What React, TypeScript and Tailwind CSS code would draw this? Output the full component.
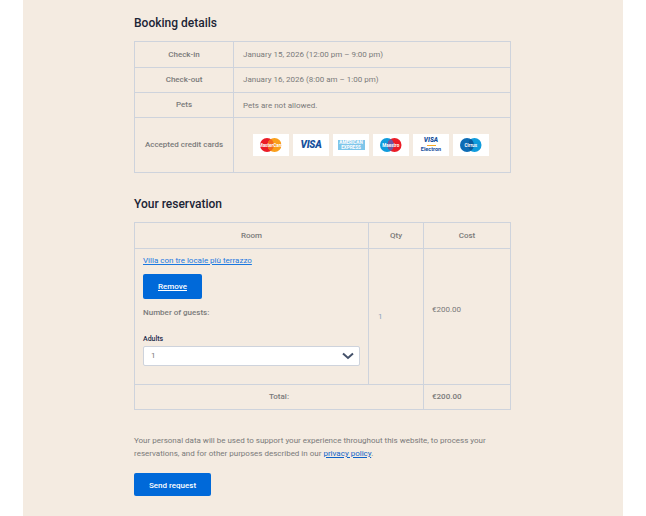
function CardBox({ children }: { children: React.ReactNode }) {
  return <div className="w-9 h-[22px] bg-white flex items-center justify-center">{children}</div>;
}

function TwoCircles({ left, right, label, overlap }: { left: string; right: string; label: string; overlap: string }) {
  return (
    <svg width="36" height="22" viewBox="0 0 36 22">
      <circle cx="14" cy="11" r="7" fill={left} />
      <circle cx="21.5" cy="11" r="7" fill={right} />
      <path d="M17.75 5.1a7 7 0 0 1 0 11.8a7 7 0 0 1 0-11.8z" fill={overlap} />
      <text x="17.75" y="12.6" textAnchor="middle" fontSize="4.6" fontWeight="700" fill="#fff" fontFamily="Roboto, sans-serif">{label}</text>
    </svg>
  );
}

export default function App() {
  return (
    <div className="min-h-[516px] bg-white font-['Roboto',sans-serif] text-[8px] text-[#7a7a7a]">
      <div className="ml-[23px] w-[600px] h-[516px] bg-[#f4ebe1] pl-[111px] pt-[14px]">
        <h2 className="text-[12px] leading-[18px] font-medium text-[#1b2435] mb-[9px]">Booking details</h2>
        <table className="w-[377px] border-collapse table-fixed">
          <colgroup>
            <col className="w-[99px]" />
            <col />
          </colgroup>
          <tbody>
            <tr className="h-[26px]">
              <th className="border border-[#ced3dc] font-medium text-center">Check-in</th>
              <td className="border border-[#ced3dc] pl-[9px]">January 15, 2026 (12:00 pm – 9:00 pm)</td>
            </tr>
            <tr className="h-[25px]">
              <th className="border border-[#ced3dc] font-medium text-center">Check-out</th>
              <td className="border border-[#ced3dc] pl-[9px]">January 16, 2026 (8:00 am – 1:00 pm)</td>
            </tr>
            <tr className="h-[25px]">
              <th className="border border-[#ced3dc] font-medium text-center">Pets</th>
              <td className="border border-[#ced3dc] pl-[9px] pt-px">Pets are not allowed.</td>
            </tr>
            <tr className="h-[55px]">
              <th className="border border-[#ced3dc] font-medium text-center">Accepted credit cards</th>
              <td className="border border-[#ced3dc] pl-[19px]">
                <div className="flex gap-1 mb-px">
                  <CardBox><TwoCircles left="#eb1c26" right="#f99f1b" overlap="#f2691f" label="MasterCard" /></CardBox>
                  <CardBox>
                    <span className="text-[10px] font-black italic text-[#16509c] tracking-tight">VISA</span>
                  </CardBox>
                  <CardBox>
                    <div className="w-[27px] h-[10px] bg-[#7fc6ea] text-white text-[4.6px] leading-[5px] font-bold text-center">AMERICAN EXPRESS</div>
                  </CardBox>
                  <CardBox><TwoCircles left="#0f9bdc" right="#eb1c26" overlap="#6c5aa5" label="Maestro" /></CardBox>
                  <CardBox>
                    <div className="flex flex-col items-center leading-none">
                      <span className="text-[6.5px] font-black italic text-[#16509c]">VISA</span>
                      <span className="w-[9px] h-px my-px bg-[#f7a823]" />
                      <span className="text-[5.5px] font-bold text-[#16509c]">Electron</span>
                    </div>
                  </CardBox>
                  <CardBox><TwoCircles left="#0d6cb5" right="#0f9bdc" overlap="#0a5a9c" label="Cirrus" /></CardBox>
                </div>
              </td>
            </tr>
          </tbody>
        </table>

        <h2 className="text-[12px] leading-[18px] font-medium text-[#1b2435] mt-[22px] mb-[9px]">Your reservation</h2>
        <table className="w-[377px] border-collapse table-fixed">
          <colgroup>
            <col className="w-[234px]" />
            <col className="w-[55px]" />
            <col />
          </colgroup>
          <thead>
            <tr className="h-[26px]">
              <th className="border border-[#ced3dc] font-medium text-center">Room</th>
              <th className="border border-[#ced3dc] font-medium text-center">Qty</th>
              <th className="border border-[#ced3dc] font-medium text-center">Cost</th>
            </tr>
          </thead>
          <tbody>
            <tr className="h-[136px]">
              <td className="border border-[#ced3dc] px-[8px] align-top pt-[6px]">
                <a href="#" className="block leading-[12px] text-[#1a78e0] underline">Villa con tre locale più terrazzo</a>
                <a href="#" className="mt-[7px] flex w-[59px] h-[25px] items-center justify-center rounded-[2px] bg-[#0069d9] text-white font-medium underline">Remove</a>
                <p className="mt-[8px] leading-[12px] font-medium">Number of guests:</p>
                <label className="block mt-[15px] text-[7px] leading-[10px] font-medium text-[#1b2a4a]">Adults</label>
                <div className="mt-[2px] flex h-[20px] w-[217px] items-center justify-between rounded-[2px] border border-[#ced3dc] bg-white pl-[7px] pr-[5px]">
                  <span>1</span>
                  <svg width="12" height="8" viewBox="0 0 12 8" fill="none" stroke="#44516a" strokeWidth="2">
                    <path d="M1 1.5l5 4.5l5-4.5" />
                  </svg>
                </div>
              </td>
              <td className="border border-[#ced3dc] pl-[9px] pt-[1px] text-[#8ea3bd]">1</td>
              <td className="border border-[#ced3dc] pl-[8px] pb-[13px]">€200.00</td>
            </tr>
            <tr className="h-[25px]">
              <th colSpan={2} className="border border-[#ced3dc] font-medium text-center">Total:</th>
              <th className="border border-[#ced3dc] pl-[8px] font-medium text-left">€200.00</th>
            </tr>
          </tbody>
        </table>

        <p className="mt-[24px] w-[377px] leading-[13px]">
          Your personal data will be used to support your experience throughout this website, to process your reservations, and for other purposes described in our <a href="#" className="text-[#0f62c8] underline">privacy policy</a>.
        </p>
        <button className="mt-[13px] block w-[77px] h-[23px] rounded-[2px] bg-[#0069d9] text-white font-medium pt-[2px]">Send request</button>
      </div>
    </div>
  );
}
